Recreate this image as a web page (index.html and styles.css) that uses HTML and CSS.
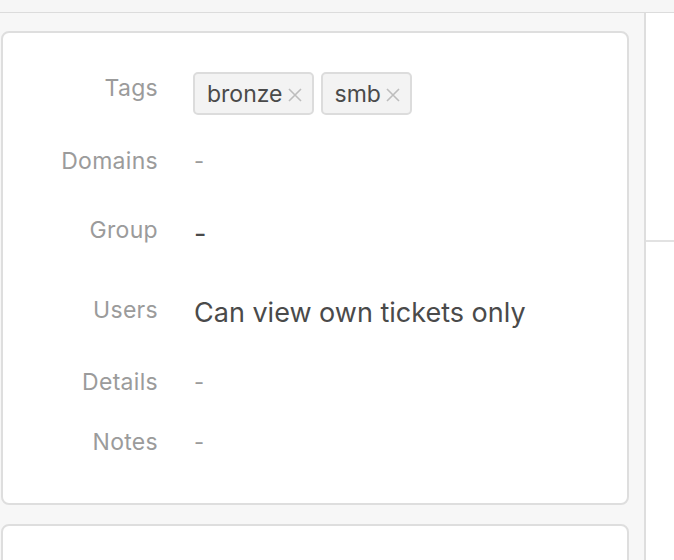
FILE: index.html
```html
<!DOCTYPE html>
<html>
<head>
<meta charset="utf-8">
<link rel="stylesheet" href="styles.css">
</head>
<body>
<div class="topbar"></div>
<div class="main">
  <div class="content">
    <section class="card card-props">
      <div class="row row-tags">
        <div class="label">Tags</div>
        <div class="value tags">
          <span class="tag">bronze<svg class="x" viewBox="0 0 14 14" width="14" height="14"><path d="M1 1L13 13M13 1L1 13"/></svg></span>
          <span class="tag">smb<svg class="x" viewBox="0 0 14 14" width="14" height="14"><path d="M1 1L13 13M13 1L1 13"/></svg></span>
        </div>
      </div>
      <div class="row row-domains">
        <div class="label">Domains</div>
        <div class="value muted">-</div>
      </div>
      <div class="row row-group">
        <div class="label">Group</div>
        <div class="value big">-</div>
      </div>
      <div class="row row-users">
        <div class="label">Users</div>
        <div class="value big">Can view own tickets only</div>
      </div>
      <div class="row row-details">
        <div class="label">Details</div>
        <div class="value muted">-</div>
      </div>
      <div class="row row-notes">
        <div class="label">Notes</div>
        <div class="value muted">-</div>
      </div>
    </section>
    <section class="card card-next"></section>
  </div>
  <aside class="side">
    <div class="side-top"></div>
  </aside>
</div>
</body>
</html>
```

FILE: styles.css
```css
* { box-sizing: border-box; }
html, body { margin: 0; padding: 0; }
body {
  width: 674px;
  height: 560px;
  overflow: hidden;
  background: #f7f7f7;
  font-family: Inter, "Helvetica Neue", Arial, sans-serif;
}
.topbar {
  height: 13px;
  background: #f6f6f6;
  border-bottom: 1px solid #dcdcdc;
}
.main {
  display: flex;
  height: 547px;
}
.content {
  width: 646px;
  flex: none;
  border-right: 2px solid #dedede;
  padding: 18px 0 0 1px;
  display: flex;
  flex-direction: column;
  gap: 19px;
}
.card {
  width: 628px;
  background: #fff;
  border: 2px solid #dedede;
  border-radius: 8px;
  flex: none;
}
.card-props {
  height: 474px;
  padding-top: 39px;
}
.card-next { height: 60px; }
.side {
  flex: 1;
  background: #fff;
}
.side-top {
  height: 229px;
  border-bottom: 2px solid #e2e2e2;
}
.row {
  display: grid;
  grid-template-columns: 155px 1fr;
  column-gap: 36px;
  align-items: start;
}
.label {
  text-align: right;
  color: #9b9b9b;
  font-size: 23px;
  letter-spacing: 0.3px;
  line-height: 30px;
}
.value {
  color: #4a4a4a;
  font-size: 22px;
  line-height: 30px;
}
.value.muted { color: #9b9b9b; }
.value.big { font-size: 27px; line-height: 36px; }
.row-tags { height: 74px; }
.row-tags .label { padding-top: 1px; }
.row-domains { height: 69px; }
.row-group { height: 80px; }
.row-group .value { margin-top: 1px; }
.row-users { height: 72px; margin-top: -2px; }
.row-users .label { padding-top: 2px; }
.row-users .value { margin-top: 2px; }
.row-details { height: 60px; margin-top: 2px; }
.row-notes { height: 30px; }
.tags {
  display: flex;
  gap: 7px;
  margin-left: -1px;
}
.tag {
  display: inline-flex;
  align-items: center;
  height: 43px;
  padding: 0 10px 0 12px;
  background: #f3f3f3;
  border: 2px solid #dcdcdc;
  border-radius: 5px;
  color: #4a4a4a;
  font-size: 23px;
}
.x {
  margin-left: 5px;
  margin-top: 2px;
  stroke: #bdbdbd;
  stroke-width: 1.6;
  fill: none;
}
```
